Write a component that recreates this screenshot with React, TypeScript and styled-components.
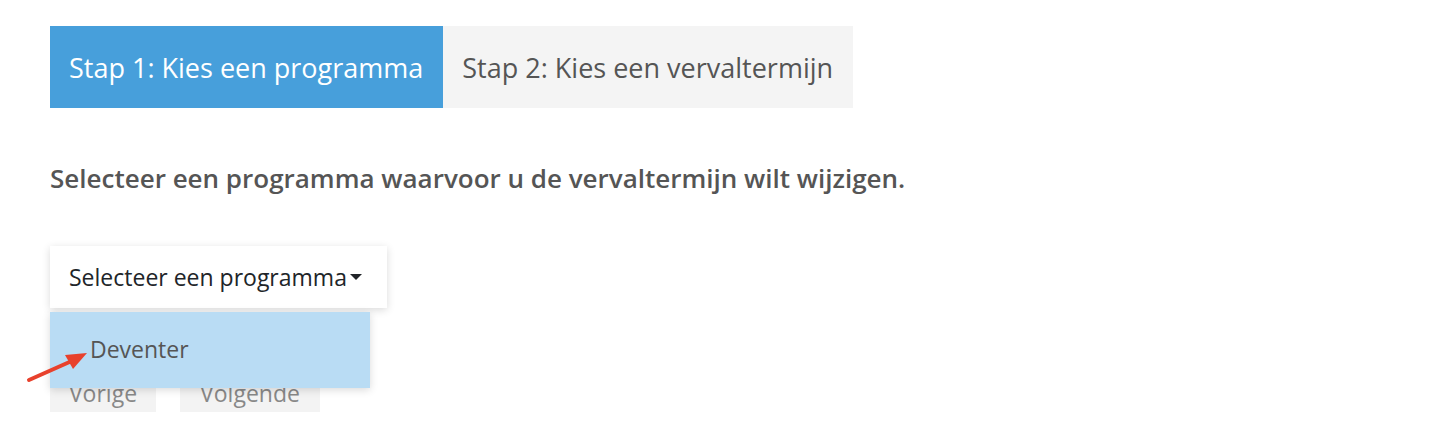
import styled, { createGlobalStyle } from 'styled-components'

const Global = createGlobalStyle`
  html, body {
    margin: 0;
    background: #fff;
    font-family: 'Open Sans', 'Noto Sans', sans-serif;
  }
`

const Page = styled.div`
  padding: 26px 50px;
`

const Tabs = styled.div`
  display: flex;
`

const Tab = styled.div<{ active?: boolean }>`
  height: 82px;
  display: flex;
  align-items: center;
  padding: 0 20px 0 19px;
  font-size: 27px;
  background: ${({ active }) => (active ? '#479fdb' : '#f4f4f4')};
  color: ${({ active }) => (active ? '#fff' : '#555')};
`

const Heading = styled.h3`
  margin: 52px 0 0;
  font-size: 26px;
  font-weight: 600;
  color: #555;
  line-height: 36px;
`

const Dropdown = styled.div`
  position: relative;
  display: inline-block;
  margin-top: 50px;
`

const Toggle = styled.button`
  height: 62px;
  padding: 0 25px 0 19px;
  border: 0;
  background: #fff;
  font-family: inherit;
  font-size: 23px;
  color: #212529;
  box-shadow: 0 2px 8px rgba(0, 0, 0, 0.15);
  display: flex;
  align-items: center;

  &:after {
    content: '';
    display: inline-block;
    margin-left: 3px;
    border-top: 0.3em solid #212529;
    border-left: 0.3em solid transparent;
    border-right: 0.3em solid transparent;
  }
`

const Menu = styled.div`
  position: absolute;
  top: 66px;
  left: 0;
  width: 320px;
  height: 76px;
  background: #b9dcf4;
  box-shadow: 0 2px 8px rgba(0, 0, 0, 0.15);
  z-index: 2;
`

const MenuItem = styled.div`
  padding: 22px 0 0 40px;
  font-size: 23px;
  line-height: 30px;
  color: #555;
`

const Actions = styled.div`
  display: flex;
  gap: 24px;
  margin-top: 42px;
`

const NavButton = styled.button`
  height: 62px;
  padding: 24px 0 0;
  border: 0;
  background: #f3f3f3;
  font-family: inherit;
  font-size: 23px;
  color: #888;
`

const Pointer = styled.svg`
  position: absolute;
  left: 24px;
  top: 344px;
  z-index: 3;
`

export default function App() {
  return (
    <>
      <Global />
      <Page>
        <Tabs>
          <Tab active>Stap 1: Kies een programma</Tab>
          <Tab>Stap 2: Kies een vervaltermijn</Tab>
        </Tabs>
        <Heading>Selecteer een programma waarvoor u de vervaltermijn wilt wijzigen.</Heading>
        <Dropdown>
          <Toggle>Selecteer een programma</Toggle>
          <Menu>
            <MenuItem>Deventer</MenuItem>
          </Menu>
        </Dropdown>
        <Actions>
          <NavButton style={{ width: 106 }}>Vorige</NavButton>
          <NavButton style={{ width: 140 }}>Volgende</NavButton>
        </Actions>
      </Page>
      <Pointer width="70" height="45" viewBox="0 0 70 45">
        <line x1="5" y1="36" x2="50" y2="16" stroke="#e8412c" strokeWidth="4" strokeLinecap="round" />
        <polygon points="63,9 41,11 49,25" fill="#e8412c" />
      </Pointer>
    </>
  )
}
